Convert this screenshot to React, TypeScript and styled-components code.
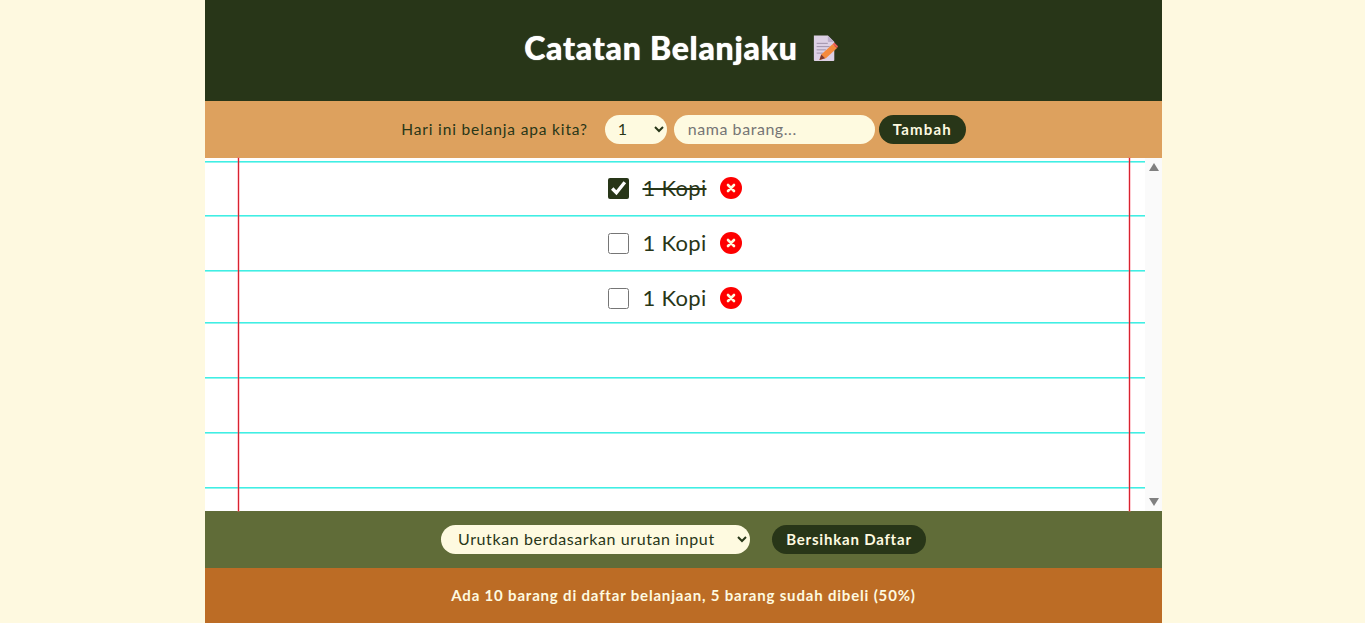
import React from 'react';
import styled, { createGlobalStyle } from 'styled-components';

const GlobalStyle = createGlobalStyle`
  html, body {
    margin: 0;
    height: 100%;
    overflow: hidden;
    background: #fef9e0;
    font-family: 'Lato', 'Noto Sans', sans-serif;
  }
  * { box-sizing: border-box; }
`;

const Page = styled.div`
  width: 957px;
  height: 623px;
  margin-left: 205px;
  display: grid;
  grid-template-rows: 101px 57px 353px 57px 55px;
`;

const Header = styled.header`
  background: #283618;
  display: flex;
  align-items: center;
  justify-content: center;
  gap: 14px;
  padding: 0 5px 6px 0;
  color: #fff;
`;

const Title = styled.h1`
  margin: 0;
  font-family: 'Lato', sans-serif;
  font-size: 32px;
  font-weight: 900;
  letter-spacing: 0.75px;
  text-shadow: 0 0 1px #fff;
`;

const Bar = styled.div<{ $bg: string; $gap?: number }>`
  background: ${({ $bg }) => $bg};
  display: flex;
  align-items: center;
  justify-content: center;
  gap: ${({ $gap }) => $gap ?? 0}px;
`;

const Label = styled.span`
  font-size: 15.5px;
  letter-spacing: 0.85px;
  color: #283618;
  margin-right: 17px;
  padding-bottom: 2px;
`;

const Select = styled.select<{ $w: number; $pad: number }>`
  width: ${({ $w }) => $w}px;
  height: 29px;
  border: none;
  border-radius: 15px;
  background: #fefae0;
  color: #283618;
  font-family: inherit;
  font-size: 16px;
  letter-spacing: 0.6px;
  padding: 0 ${({ $pad }) => $pad}px 2px;
`;

const Input = styled.input`
  width: 201px;
  height: 29px;
  margin: 0 4px 0 7px;
  padding: 0 14px 2px;
  border: none;
  border-radius: 15px;
  background: #fefae0;
  font-family: inherit;
  font-size: 16px;
  letter-spacing: 0.55px;
  &::placeholder { color: #757575; }
`;

const Button = styled.button<{ $w: number; $track: number }>`
  width: ${({ $w }) => $w}px;
  height: 29px;
  padding: 0 0 2px;
  border: none;
  border-radius: 15px;
  background: #283618;
  color: #fefae0;
  font-family: inherit;
  font-size: 15px;
  font-weight: 700;
  letter-spacing: ${({ $track }) => $track}px;
`;

const Sheet = styled.div`
  position: relative;
  display: flex;
  background: #fff;
  min-height: 0;

  &::before, &::after {
    content: '';
    position: absolute;
    top: 0;
    bottom: 0;
    width: 1px;
    background: #d8232f;
    box-shadow: 0 0 0 1px rgba(255, 90, 110, 0.3);
    pointer-events: none;
  }
  &::before { left: 33px; }
  &::after { right: 32px; }
`;

const List = styled.ul`
  flex: 1;
  min-width: 0;
  margin: 0;
  padding: 3px 0 0;
  list-style: none;
  overflow: hidden;
`;

const ScrollRail = styled.div`
  flex: 0 0 17px;
  display: flex;
  flex-direction: column;
  justify-content: space-between;
  align-items: center;
  padding: 5px 0;
  background: #fafafa;
`;

const ScrollArrow = styled.span<{ $down?: boolean }>`
  width: 0;
  height: 0;
  border-left: 5.5px solid transparent;
  border-right: 5.5px solid transparent;
  border-${({ $down }) => ($down ? 'top' : 'bottom')}: 8px solid #808080;
`;

const Row = styled.li<{ $h: number; $first?: boolean; $pt?: number; $pb?: number }>`
  height: ${({ $h }) => $h}px;
  padding: ${({ $pt }) => $pt ?? 0}px 0 ${({ $pb }) => $pb ?? 0}px;
  border-top: ${({ $first }) => ($first ? '1px solid #40eee4' : 'none')};
  border-bottom: 1px solid #40eee4;
  box-shadow: 0 1px 0 #8ff5ee${({ $first }) => ($first ? ', inset 0 1px 0 #8ff5ee' : '')};
  display: flex;
  align-items: center;
  justify-content: center;
`;

const Check = styled.input`
  width: 21px;
  height: 21px;
  margin: 0 13px 0 0;
  accent-color: #283618;
`;

const ItemText = styled.span<{ $done?: boolean }>`
  font-size: 22px;
  letter-spacing: 0.3px;
  color: #283618;
  text-decoration: ${({ $done }) => ($done ? 'line-through' : 'none')};
  margin-right: 13px;
  padding-bottom: 2px;
`;

const RemoveButton = styled.button`
  width: 22px;
  height: 22px;
  padding: 0;
  border: none;
  border-radius: 50%;
  background: #fe0000;
  display: flex;
  align-items: center;
  justify-content: center;
`;

const Stats = styled.footer`
  background: #bc6c25;
  display: flex;
  align-items: center;
  justify-content: center;
  padding-bottom: 2px;
  color: #fefae0;
  font-size: 15px;
  font-weight: 700;
  letter-spacing: 0.82px;
`;

const MemoIcon = () => (
  <svg width="26" height="28" viewBox="0 0 28 30">
    <path d="M2 1.5h15l7 7V28a1 1 0 0 1-1 1H3a1 1 0 0 1-1-1z" fill="#dcd0e4" />
    <path d="M17 1.5l7 7h-6a1 1 0 0 1-1-1z" fill="#bcaecb" />
    <path d="M5 10h12M5 13.5h14M5 17h10M5 20.5h7" stroke="#9a8fa8" strokeWidth="1" />
    <path d="M8 28l2-6 12-11 5 4-12 11z" fill="#f58a3c" />
    <path d="M22 11l2-2 4 4-1 2z" fill="#ee5f55" />
    <path d="M8 28l2-6 4 4z" fill="#7c3a30" />
  </svg>
);

const CrossIcon = () => (
  <svg width="10" height="10" viewBox="0 0 10 10">
    <path d="M2 2l6 6M8 2l-6 6" stroke="#fefae0" strokeWidth="2.6" strokeLinecap="round" />
  </svg>
);

const items = [
  { id: 1, label: '1 Kopi', done: true, h: 55, pb: 1 },
  { id: 2, label: '1 Kopi', done: false, h: 55 },
  { id: 3, label: '1 Kopi', done: false, h: 52, pt: 3 },
];

const blankRows = [55, 55, 55, 24];

export default function App() {
  return (
    <>
      <GlobalStyle />
      <Page>
        <Header>
          <Title>Catatan Belanjaku</Title>
          <MemoIcon />
        </Header>
        <Bar $bg="#dda15e">
          <Label>Hari ini belanja apa kita?</Label>
          <Select $w={62} $pad={9} defaultValue="1">
            <option value="1">1</option>
            <option value="2">2</option>
          </Select>
          <Input placeholder="nama barang..." />
          <Button $w={87} $track={1.2}>Tambah</Button>
        </Bar>
        <Sheet>
          <List>
            {items.map((item, i) => (
              <Row key={item.id} $h={item.h} $first={i === 0} $pt={item.pt} $pb={item.pb}>
                <Check type="checkbox" defaultChecked={item.done} />
                <ItemText $done={item.done}>{item.label}</ItemText>
                <RemoveButton><CrossIcon /></RemoveButton>
              </Row>
            ))}
            {blankRows.map((h, i) => (
              <Row key={i} $h={h} />
            ))}
          </List>
          <ScrollRail aria-hidden>
            <ScrollArrow />
            <ScrollArrow $down />
          </ScrollRail>
        </Sheet>
        <Bar $bg="#606c38" $gap={22}>
          <Select $w={309} $pad={13} defaultValue="input">
            <option value="input">Urutkan berdasarkan urutan input</option>
          </Select>
          <Button $w={154} $track={0.8}>Bersihkan Daftar</Button>
        </Bar>
        <Stats>Ada 10 barang di daftar belanjaan, 5 barang sudah dibeli (50%)</Stats>
      </Page>
    </>
  );
}
